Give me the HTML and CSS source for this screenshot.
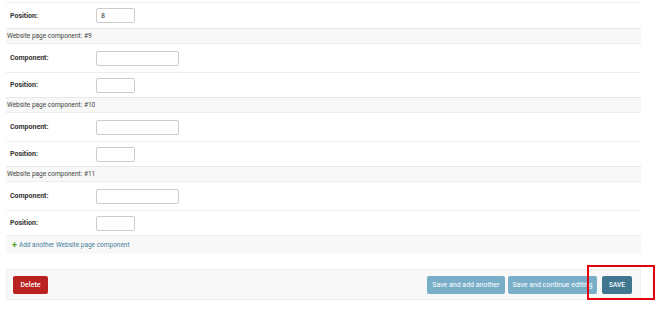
FILE: index.html
```html
<!DOCTYPE html>
<html>
<head>
<meta charset="utf-8">
<link rel="stylesheet" href="styles.css">
</head>
<body>
<div class="page">
  <div class="row first">
    <label class="lbl">Position:</label>
    <input class="inp small" type="text" value="8">
  </div>
  <div class="inline-head">Website page component: #9</div>
  <div class="row tall">
    <label class="lbl">Component:</label>
    <input class="inp wide" type="text">
  </div>
  <div class="row">
    <label class="lbl">Position:</label>
    <input class="inp small" type="text">
  </div>
  <div class="inline-head">Website page component: #10</div>
  <div class="row tall">
    <label class="lbl">Component:</label>
    <input class="inp wide" type="text">
  </div>
  <div class="row">
    <label class="lbl">Position:</label>
    <input class="inp small" type="text">
  </div>
  <div class="inline-head">Website page component: #11</div>
  <div class="row tall">
    <label class="lbl">Component:</label>
    <input class="inp wide" type="text">
  </div>
  <div class="row">
    <label class="lbl">Position:</label>
    <input class="inp small" type="text">
  </div>
  <div class="add-row">
    <span class="plus">+</span><span class="add-link">Add another Website page component</span>
  </div>
  <div class="submit-row">
    <a class="btn delete">Delete</a>
    <div class="spacer"></div>
    <a class="btn light">Save and add another</a>
    <a class="btn light">Save and continue editing</a>
    <div class="save-wrap">
      <a class="btn save">SAVE</a>
    </div>
  </div>
</div>
</body>
</html>
```
FILE: styles.css
```css
html, body { margin: 0; padding: 0; background: #fff; }
body { font-family: Roboto, "Liberation Sans", sans-serif; color: #333; }
.page { margin-left: 6px; width: 635px; }
.row {
  display: flex; align-items: center;
  height: 25px; border-top: 1px solid #eee; box-sizing: border-box;
  padding-left: 4px;
}
.row.first { margin-top: 2px; height: 26px; }
.row.tall { height: 29px; }
.lbl { width: 86px; font-size: 7px; font-weight: 700; color: #333; }
.inp {
  box-sizing: border-box; height: 15px; border: 1px solid #ccc; border-radius: 2px;
  font-family: Roboto, sans-serif; font-size: 7px; padding: 0 4px; color: #333; outline: none;
}
.inp.small { width: 39px; }
.inp.wide { width: 83px; }
.inline-head {
  background: #f8f8f8; border-top: 1px solid #e8e8e8; height: 15px; box-sizing: border-box;
  font-size: 6.5px; color: #444; padding-left: 1px; line-height: 14px;
}
.add-row {
  background: #f8f8f8; border-top: 1px solid #eee; height: 19px; box-sizing: border-box;
  display: flex; align-items: center; padding-left: 6px; font-size: 6.5px;
}
.plus { color: #5aa02c; font-weight: 700; font-size: 9px; margin-right: 2px; }
.add-link { color: #447e9b; }
.submit-row {
  margin-top: 15px; height: 31px; background: #f8f8f8; border: 1px solid #eee; box-sizing: border-box;
  display: flex; align-items: center; padding-left: 6px;
}
.spacer { flex: 1; }
.btn {
  display: flex; align-items: center; justify-content: center; height: 18px; border-radius: 2px;
  font-size: 7px; color: #fff; box-sizing: border-box;
}
.delete { background: #ba2121; width: 35px; font-weight: 500; }
.light { background: #79aec8; margin-right: 3px; }
.light:nth-of-type(2) { width: 78px; }
.light:nth-of-type(3) { width: 89px; }
.save-wrap {
  position: relative; margin-right: 8px; margin-left: 2px;
}
.save { background: #417690; width: 30px; font-weight: 500; font-size: 6.5px; }
.save-wrap::after {
  content: ""; position: absolute; left: -15px; top: -11px; right: -23px; bottom: -6px;
  border: 2px solid #e3000f;
}
```
